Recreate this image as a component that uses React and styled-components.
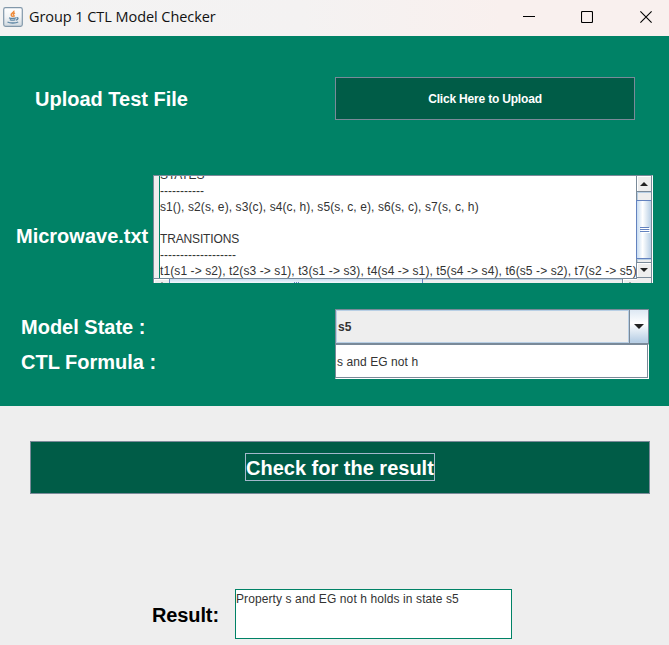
import React from "react";
import styled, { createGlobalStyle } from "styled-components";

const Global = createGlobalStyle`
  * { box-sizing: border-box; }
  body { margin: 0; overflow: hidden; font-family: "Liberation Sans", Arial, sans-serif; }
`;

const Window = styled.div`
  width: 669px;
  height: 645px;
  display: flex;
  flex-direction: column;
  background: #eeeeee;
  overflow: hidden;
`;

const TitleBar = styled.header`
  height: 36px;
  flex: none;
  display: flex;
  align-items: center;
  padding: 0 17px 2px 3px;
  background: linear-gradient(90deg, #f3f3f3 0%, #f4f2f2 45%, #f9f0ee 75%);
`;

const Title = styled.h1`
  margin: 0 auto 0 6px;
  font: 400 14.5px/20px "Open Sans", "Noto Sans", sans-serif;
  letter-spacing: -0.06px;
  color: #111;
`;

const Controls = styled.div`
  display: flex;
  gap: 46px;
  svg { display: block; }
  svg:last-child { margin-left: 1px; }
`;

const Form = styled.main`
  height: 370px;
  flex: none;
  background: #008266;
  display: flex;
  flex-direction: column;
`;

const UploadRow = styled.div`
  height: 43px;
  margin-top: 41px;
  padding: 0 34px 0 35px;
  display: flex;
  align-items: center;
  justify-content: space-between;
`;

const Label = styled.label`
  font-size: 20px;
  line-height: 24px;
  font-weight: 700;
  color: ${(p) => p.$color || "#fff"};
  letter-spacing: ${(p) => p.$spacing || 0}px;
  white-space: nowrap;
`;

const UploadButton = styled.button`
  width: 300px;
  height: 43px;
  padding: 0;
  border: 1px solid #7a8a99;
  background: #005c47;
  color: #fff;
  font: 700 12px "Liberation Sans", Arial, sans-serif;
  letter-spacing: -0.19px;
`;

const FileRow = styled.div`
  height: 108px;
  margin-top: 55px;
  padding: 0 16px;
  display: flex;
  justify-content: space-between;
  & > label { margin-top: 49px; }
`;

const ScrollPane = styled.section`
  width: 500px;
  height: 108px;
  display: grid;
  grid-template-columns: 5px 478px 14px;
  grid-template-rows: 102px 5px;
  border-top: 1px solid #7a8a99;
  border-left: 1px solid #7a8a99;
  border-right: 1px solid #fff;
  box-shadow: inset -1px 0 #7a8a99;
  background: #eeeeee;
  overflow: hidden;
`;

const Gutter = styled.div`
  background: #eeeeee;
`;

const FileText = styled.div`
  height: 102px;
  overflow: hidden;
  background: #fff;
  border-left: 1px solid #008266;
  border-right: 1px solid #7a8a99;
  display: flex;
  flex-direction: column;
  justify-content: flex-end;
  color: #333;
`;

const Line = styled.div`
  flex: none;
  height: 16px;
  font-size: 12px;
  line-height: 18px;
  white-space: pre;
  letter-spacing: ${(p) => p.$spacing || 0}px;
`;

const VerticalBar = styled.div`
  display: flex;
  flex-direction: column;
`;

const Arrow = styled.div`
  height: 16px;
  flex: none;
  display: flex;
  align-items: center;
  justify-content: center;
  border-bottom: 1px solid #7a8a99;
  border-top: ${(p) => (p.$down ? "1px solid #7a8a99" : "0")};
  background: #eeeeee;
  box-shadow: inset 1px 1px #fff;
`;

const Track = styled.div`
  height: ${(p) => p.$size}px;
  flex: none;
  background: #eeeeee;
  box-shadow: inset 1px 1px #b8cfe5;
`;

const Thumb = styled.div`
  height: 59px;
  flex: none;
  border: 1px solid #6382bf;
  border-width: 1px 0;
  background: linear-gradient(90deg, #c8ddf2, #fff 40%, #b8cfe5);
  box-shadow: -1px 0 #6382bf;
  display: flex;
  flex-direction: column;
  align-items: center;
  justify-content: center;
  gap: 1px;
`;

const Grip = styled.i`
  width: 9px;
  height: 1px;
  background: #6382bf;
  box-shadow: 1px 1px #fff;
`;

const HorizontalBar = styled.div`
  grid-column: 1 / 3;
  height: 5px;
  display: flex;
  border-top: 1px solid #7a8a99;
  overflow: hidden;
`;

const BarEnd = styled.div`
  width: ${(p) => p.$size}px;
  flex: none;
  display: flex;
  justify-content: center;
  padding-top: 3px;
  background: #eee;
  box-shadow: inset 1px 1px #fff;
  border-left: ${(p) => (p.$right ? "1px solid #7a8a99" : "0")};
`;

const BarThumb = styled.div`
  width: 254px;
  flex: none;
  border-left: 1px solid #6382bf;
  border-right: 1px solid #6382bf;
  box-shadow: 0 -1px #6382bf;
  background: linear-gradient(#c8ddf2, #f3f8fc);
  display: flex;
  gap: 1px;
  justify-content: center;
  padding-top: 3px;
`;

const Dot = styled.i`
  width: 1px;
  height: 2px;
  background: #6382bf;
`;

const BarTrack = styled.div`
  flex: 1;
  background: #eeeeee;
  box-shadow: inset 0 1px #b8cfe5;
`;

const Fields = styled.div`
  margin-top: 26px;
  padding: 0 20px 0 21px;
  display: grid;
  grid-template-columns: 314px 314px;
  grid-template-rows: 35px 35px;
  align-items: center;
`;

const Combo = styled.div`
  height: 35px;
  display: flex;
  border: 1px solid #7a8a99;
  background: #eeeeee;
`;

const ComboValue = styled.div`
  flex: 1;
  height: 33px;
  border: 1px solid #b8cfe5;
  padding-left: 1px;
  font-size: 12px;
  font-weight: 700;
  line-height: 33px;
  color: #333;
`;

const ComboButton = styled.div`
  width: 19px;
  border-left: 1px solid #7a8a99;
  background: linear-gradient(#dde8f3, #fff 40%, #b8cfe5 95%);
  display: flex;
  align-items: center;
  justify-content: center;
`;

const FormulaInput = styled.div`
  height: 35px;
  border: 1px solid #fff;
  border-left-color: #7a8a99;
  border-top-color: #7a8a99;
  box-shadow: inset -1px -1px #7a8a99;
  background: #fff;
  padding-left: 1px;
  font-size: 12px;
  line-height: 35px;
  color: #333;
  letter-spacing: 0.08px;
`;

const CheckButton = styled.button`
  width: 620px;
  height: 53px;
  flex: none;
  margin: 35px 0 0 30px;
  padding: 0 0 1px;
  border: 1px solid #7a8a99;
  background: #005c47;
  display: flex;
  align-items: center;
  justify-content: center;
`;

const Focus = styled.span`
  width: 190px;
  height: 28px;
  border: 1px solid #a3b8cc;
  color: #fff;
  font: 700 20px/28px "Liberation Sans", Arial, sans-serif;
  white-space: nowrap;
  text-align: left;
`;

const ResultRow = styled.div`
  margin: 95px 0 0 152px;
  display: flex;
  align-items: center;
  & > label { padding-top: 2px; }
`;

const ResultBox = styled.div`
  width: 277px;
  height: 50px;
  margin-left: auto;
  margin-right: 157px;
  border: 1px solid #008266;
  background: #fff;
  color: #333;
  font-size: 12px;
  line-height: 19px;
  letter-spacing: 0.1px;
`;

const Triangle = ({ down, width = 8, height = 4 }) => (
  <svg width={width} height={height} viewBox="0 0 8 4" preserveAspectRatio="none">
    <path d={down ? "M0 0H8L4 4Z" : "M0 4H8L4 0Z"} fill="#222" />
  </svg>
);

const JavaIcon = () => (
  <svg width="20" height="20" viewBox="0 0 20 20" fill="none">
    <defs>
      <linearGradient id="tile" x1="0" y1="0" x2="0" y2="1">
        <stop offset="0" stopColor="#fff" />
        <stop offset=".5" stopColor="#f2f4f6" />
        <stop offset="1" stopColor="#cfd8df" />
      </linearGradient>
    </defs>
    <rect x=".7" y=".7" width="18.6" height="18.6" rx="1.8" fill="url(#tile)" stroke="#8298aa" strokeWidth="1.2" />
    <path d="M10.8 3.6c1 2-3.2 2.6-2.6 4.4.2.8 1.2 1.2 1.3 2M12 5.8c-1.6.8-2.2 1.6-1.2 2.5.5.5.2 1.2-.4 1.6" stroke="#ed8b3b" strokeWidth="1.5" />
    <path d="M6 10.9c2 .7 5 .6 7 0M6.8 12.6c1.8.7 3.8.7 5.6 0M13.4 10.8c2.3-.5 2 1.8-.4 2.3M4.5 15c2.5 1.4 8.3 1.3 10.7 0" stroke="#5f87a5" strokeWidth="1.3" />
  </svg>
);

const fileLines = [
  ["STATES", -0.1],
  ["-----------", 0],
  ["s1(), s2(s, e), s3(c), s4(c, h), s5(s, c, e), s6(s, c), s7(s, c, h)", 0.1],
  ["", 0],
  ["TRANSITIONS", -0.15],
  ["-------------------", 0],
  ["t1(s1 -> s2), t2(s3 -> s1), t3(s1 -> s3), t4(s4 -> s1), t5(s4 -> s4), t6(s5 -> s2), t7(s2 -> s5)", 0.1],
];

export default function App() {
  return (
    <Window>
      <Global />
      <TitleBar>
        <JavaIcon />
        <Title>Group 1 CTL Model Checker</Title>
        <Controls>
          <svg width="12" height="12" viewBox="0 0 12 12">
            <path d="M0 5.5h12" stroke="#000" />
          </svg>
          <svg width="12" height="12" viewBox="0 0 12 12">
            <rect x=".5" y=".5" width="11" height="11" rx="1" fill="none" stroke="#000" strokeWidth="1.1" />
          </svg>
          <svg width="12" height="12" viewBox="0 0 12 12">
            <path d="M.4 .4l11.2 11.2M11.6 .4L.4 11.6" stroke="#000" strokeWidth="1.1" />
          </svg>
        </Controls>
      </TitleBar>
      <Form>
        <UploadRow>
          <Label>Upload Test File</Label>
          <UploadButton>Click Here to Upload</UploadButton>
        </UploadRow>
        <FileRow>
          <Label>Microwave.txt</Label>
          <ScrollPane>
            <Gutter />
            <FileText>
              {fileLines.map(([text, spacing], i) => (
                <Line key={i} $spacing={spacing}>{text}</Line>
              ))}
            </FileText>
            <VerticalBar>
              <Arrow><Triangle /></Arrow>
              <Track $size={8} />
              <Thumb><Grip /><Grip /><Grip /></Thumb>
              <Track $size={3} />
              <Arrow $down><Triangle down /></Arrow>
            </VerticalBar>
            <HorizontalBar>
              <BarEnd $size={15}><Triangle width={4} height={3} /></BarEnd>
              <BarThumb><Dot /><Dot /><Dot /></BarThumb>
              <BarTrack />
              <BarEnd $size={15} $right><Triangle width={4} height={3} /></BarEnd>
            </HorizontalBar>
          </ScrollPane>
        </FileRow>
        <Fields>
          <Label>Model State :</Label>
          <Combo>
            <ComboValue>s5</ComboValue>
            <ComboButton><Triangle down width={10} height={5} /></ComboButton>
          </Combo>
          <Label>CTL Formula :</Label>
          <FormulaInput>s and EG not h</FormulaInput>
        </Fields>
      </Form>
      <CheckButton><Focus>Check for the result</Focus></CheckButton>
      <ResultRow>
        <Label $color="#000" $spacing={-0.12}>Result:</Label>
        <ResultBox>Property s and EG not h holds in state s5</ResultBox>
      </ResultRow>
    </Window>
  );
}
